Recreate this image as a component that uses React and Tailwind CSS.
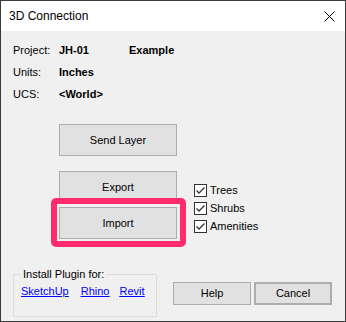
import React from "react";

const ui = { fontFamily: '"Liberation Sans", Arial, sans-serif' };

function Box() {
  return (
    <span className="w-[13px] h-[13px] border border-[#333333] bg-white flex items-center justify-center shrink-0">
      <svg width="11" height="11" viewBox="0 0 11 11">
        <polyline points="1.5,5.5 4,8 9.5,2.5" fill="none" stroke="#333333" strokeWidth="1.3" />
      </svg>
    </span>
  );
}

function Check({ label }) {
  return (
    <label className="flex items-center h-[13px] gap-[3px] text-[11px] leading-[13px] text-black">
      <Box />
      <span>{label}</span>
    </label>
  );
}

function Btn({ children, className = "" }) {
  return (
    <button
      className={
        "flex items-center justify-center bg-[#e1e1e1] border border-[#adadad] text-[11px] leading-[13px] text-black " +
        className
      }
    >
      {children}
    </button>
  );
}

export default function App() {
  return (
    <div
      className="w-[346px] h-[322px] border border-[#3a3a3a] bg-[#f0f0f0] flex flex-col overflow-hidden"
      style={ui}
    >
      {/* title bar */}
      <div className="h-[30px] bg-white flex items-center justify-between pl-[8px] pr-[10px] shrink-0">
        <span className="text-[12px] text-black">3D Connection</span>
        <svg width="11" height="11" viewBox="0 0 11 11">
          <path d="M0.5 0.5 L10.5 10.5 M10.5 0.5 L0.5 10.5" stroke="#000" strokeWidth="1" />
        </svg>
      </div>

      <div className="flex-1 flex flex-col pl-[12px]">
        {/* info */}
        <div className="pt-[13px] flex flex-col gap-[9px] text-[11px] leading-[13px] text-black">
          <div className="flex h-[13px]">
            <span className="w-[46px]">Project:</span>
            <span className="w-[70px] font-bold">JH-01</span>
            <span className="font-bold">Example</span>
          </div>
          <div className="flex h-[13px]">
            <span className="w-[46px]">Units:</span>
            <span className="font-bold">Inches</span>
          </div>
          <div className="flex h-[13px]">
            <span className="w-[46px]">UCS:</span>
            <span className="font-bold">&lt;World&gt;</span>
          </div>
        </div>

        {/* actions */}
        <div className="flex mt-[23px] ml-[46px]">
          <div className="flex flex-col w-[118px]">
            <Btn className="h-[32px]">Send Layer</Btn>
            <Btn className="h-[32px] mt-[15px]">Export</Btn>
            <div className="relative mt-[4px]">
              <Btn className="h-[32px] w-full">Import</Btn>
              <div className="absolute top-[-9px] left-[-8px] right-[-9px] bottom-[-8px] border-[6px] border-[#ff2b6c] rounded-[5px] pointer-events-none" />
            </div>
          </div>
          <div className="flex flex-col gap-[5px] ml-[17px] mt-[60px]">
            <Check label="Trees" />
            <Check label="Shrubs" />
            <Check label="Amenities" />
          </div>
        </div>

        {/* bottom */}
        <div className="flex items-start mt-[29px]">
          <fieldset className="w-[144px] h-[49px] border border-[#dcdcdc] pl-[7px]">
            <legend className="px-[2px] text-[11px] leading-[13px] text-black">Install Plugin for:</legend>
            <div className="flex text-[11px] leading-[13px] text-[#0000ff] underline mt-[4px]">
              <a href="#" className="underline">SketchUp</a>
              <a href="#" className="underline ml-[12px]">Rhino</a>
              <a href="#" className="underline ml-[10px]">Revit</a>
            </div>
          </fieldset>
          <div className="flex gap-[3px] ml-[16px] mt-[14px]">
            <Btn className="w-[78px] h-[23px]">Help</Btn>
            <Btn className="w-[78px] h-[23px] border-2 border-[#0078d7]">Cancel</Btn>
          </div>
        </div>
      </div>
    </div>
  );
}
